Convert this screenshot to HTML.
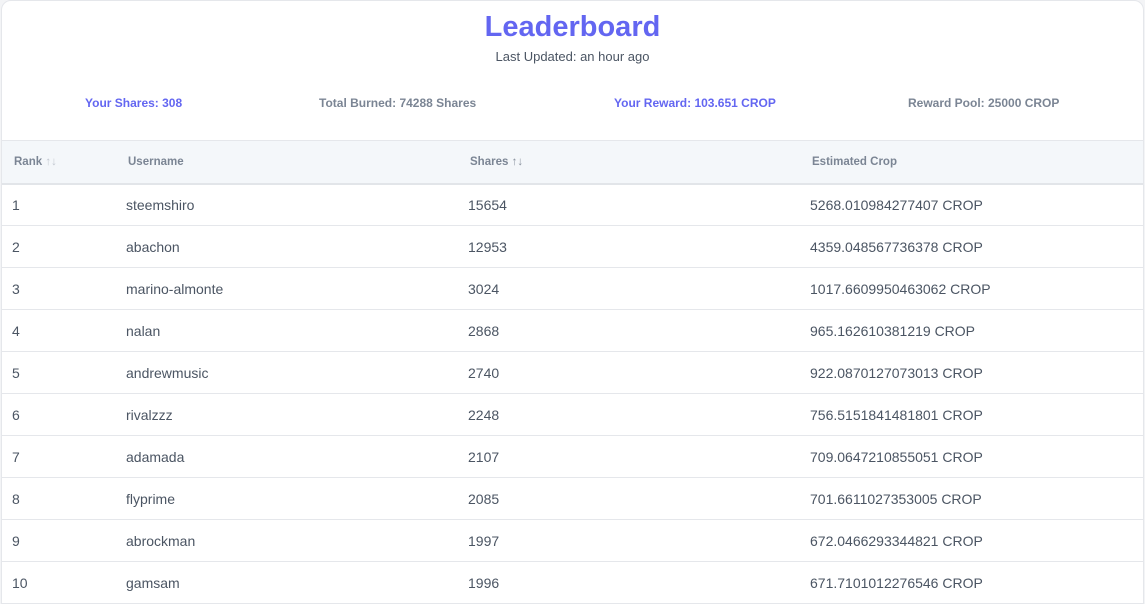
<!DOCTYPE html>
<html style="height:604px;overflow:hidden"><head><style>
body{margin:0;width:1145px;height:604px;overflow:hidden;background:#f3f4f6;font-family:"Liberation Sans",sans-serif;position:relative;}
.card{position:absolute;left:1px;top:0;width:1141px;height:620px;background:#fff;border:1px solid #e5e7eb;border-radius:10px;overflow:hidden;}
h1{position:absolute;top:10px;left:0;width:1141px;text-align:center;margin:0;font-size:29px;font-weight:bold;color:#6366f1;}
.sub{position:absolute;top:48px;left:0;width:1141px;text-align:center;font-size:13px;color:#4b5563;}
.stat{position:absolute;top:95px;font-size:12px;font-weight:bold;}
.p{color:#6366f1}.g{color:#7b8594}
.thead{position:absolute;top:139px;left:0;width:1141px;height:42px;background:#f4f7fa;border-top:1px solid #e5e7eb;border-bottom:2px solid #e2e5e9;}
.th{position:absolute;top:15px;font-size:11.5px;font-weight:bold;color:#7b8594;}
.th span{color:#c3c9d1;font-weight:normal}
.row{position:absolute;left:0;width:1141px;height:41px;border-bottom:1px solid #e5e7eb;font-size:14px;color:#4b5563;}
.row div{position:absolute;top:13px;}
</style></head><body>
<div class="card">
<h1>Leaderboard</h1>
<div class="sub">Last Updated: an hour ago</div>
<div class="stat p" style="left:83px">Your Shares: 308</div>
<div class="stat g" style="left:317px">Total Burned: 74288 Shares</div>
<div class="stat p" style="left:612px">Your Reward: 103.651 CROP</div>
<div class="stat g" style="left:906px">Reward Pool: 25000 CROP</div>
<div class="thead">
<div class="th" style="left:12px">Rank <span>↑↓</span></div>
<div class="th" style="left:126px">Username</div>
<div class="th" style="left:468px">Shares <span style="color:#8a939f">↑↓</span></div>
<div class="th" style="left:810px">Estimated Crop</div>
</div>
<div class="row" style="top:183px"><div style="left:10px">1</div><div style="left:124px">steemshiro</div><div style="left:466px">15654</div><div style="left:808px">5268.010984277407 CROP</div></div>
<div class="row" style="top:225px"><div style="left:10px">2</div><div style="left:124px">abachon</div><div style="left:466px">12953</div><div style="left:808px">4359.048567736378 CROP</div></div>
<div class="row" style="top:267px"><div style="left:10px">3</div><div style="left:124px">marino-almonte</div><div style="left:466px">3024</div><div style="left:808px">1017.6609950463062 CROP</div></div>
<div class="row" style="top:309px"><div style="left:10px">4</div><div style="left:124px">nalan</div><div style="left:466px">2868</div><div style="left:808px">965.162610381219 CROP</div></div>
<div class="row" style="top:351px"><div style="left:10px">5</div><div style="left:124px">andrewmusic</div><div style="left:466px">2740</div><div style="left:808px">922.0870127073013 CROP</div></div>
<div class="row" style="top:393px"><div style="left:10px">6</div><div style="left:124px">rivalzzz</div><div style="left:466px">2248</div><div style="left:808px">756.5151841481801 CROP</div></div>
<div class="row" style="top:435px"><div style="left:10px">7</div><div style="left:124px">adamada</div><div style="left:466px">2107</div><div style="left:808px">709.0647210855051 CROP</div></div>
<div class="row" style="top:477px"><div style="left:10px">8</div><div style="left:124px">flyprime</div><div style="left:466px">2085</div><div style="left:808px">701.6611027353005 CROP</div></div>
<div class="row" style="top:519px"><div style="left:10px">9</div><div style="left:124px">abrockman</div><div style="left:466px">1997</div><div style="left:808px">672.0466293344821 CROP</div></div>
<div class="row" style="top:561px"><div style="left:10px">10</div><div style="left:124px">gamsam</div><div style="left:466px">1996</div><div style="left:808px">671.7101012276546 CROP</div></div>
</div>
</body></html>
